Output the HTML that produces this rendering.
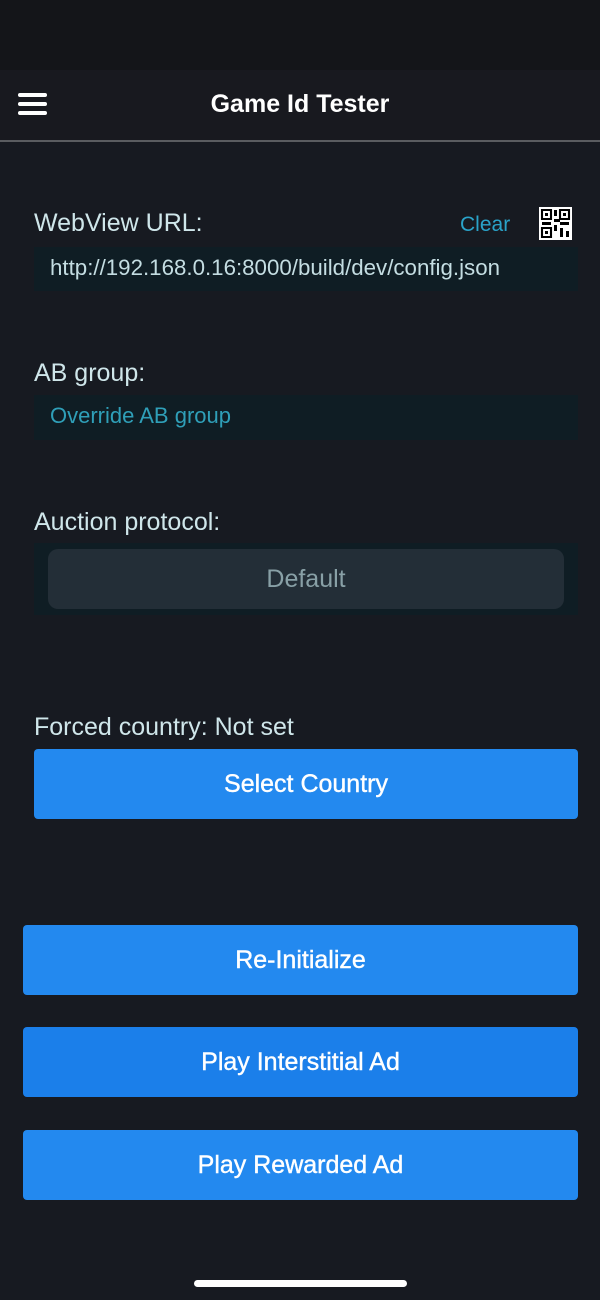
<!DOCTYPE html><html><head><style>
body{margin:0;width:600px;height:1300px;background:#171a21;font-family:"Liberation Sans",sans-serif;position:relative;overflow:hidden}
.a{position:absolute}
.lbl{color:#cfe6ea;font-size:25px}
.btn{position:absolute;background:#2389ef;border-radius:4px;color:#fff;font-size:25px;text-align:center;line-height:70px;height:70px;-webkit-text-stroke:0.4px #fff}
</style></head><body>
<div class="a" style="left:0;top:0;width:600px;height:70px;background:#141519"></div>
<div class="a" style="left:0;top:70px;width:600px;height:70px;background:#18191f"></div>
<div class="a" style="left:0;top:140px;width:600px;height:2px;background:#5a5c60"></div>
<div class="a" style="left:18px;top:93px;width:29px;height:4px;background:#fff;border-radius:2px"></div>
<div class="a" style="left:18px;top:102px;width:29px;height:4px;background:#fff;border-radius:2px"></div>
<div class="a" style="left:18px;top:111px;width:29px;height:4px;background:#fff;border-radius:2px"></div>
<div class="a" style="left:0;top:90px;width:600px;text-align:center;color:#fff;font-size:25px;font-weight:bold">Game Id Tester</div>
<div class="a lbl" style="left:34px;top:209px">WebView URL:</div>
<div class="a" style="left:460px;top:213px;color:#2aa3c9;font-size:21px">Clear</div>
<svg class="a" style="left:539px;top:207px" width="33" height="33" viewBox="0 0 11 11"><rect width="11" height="11" fill="#fff"/><g fill="#000"><path d="M1 1h3v3H1zM7 1h3v3H7zM1 7h3v3H1z" fill="none" stroke="#000" stroke-width=".7"/><rect x="2" y="2" width="1" height="1"/><rect x="8" y="2" width="1" height="1"/><rect x="2" y="8" width="1" height="1"/><rect x="5" y="1" width="1" height="2"/><rect x="5" y="4" width="2" height="1"/><rect x="7" y="5" width="3" height="1"/><rect x="5" y="6" width="1" height="2"/><rect x="7" y="7" width="1" height="3"/><rect x="9" y="8" width="1" height="2"/><rect x="1" y="5" width="3" height="1"/></g></svg>
<div class="a" style="left:34px;top:247px;width:544px;height:44px;background:#0f1d24"></div>
<div class="a" style="left:50px;top:255px;color:#c4dde2;font-size:22.3px">http://192.168.0.16:8000/build/dev/config.json</div>
<div class="a lbl" style="left:34px;top:359px">AB group:</div>
<div class="a" style="left:34px;top:395px;width:544px;height:45px;background:#0f1d24"></div>
<div class="a" style="left:50px;top:403px;color:#2f9fb8;font-size:22px">Override AB group</div>
<div class="a lbl" style="left:34px;top:508px">Auction protocol:</div>
<div class="a" style="left:34px;top:543px;width:544px;height:72px;background:#0f1d24"></div>
<div class="a" style="left:48px;top:549px;width:516px;height:60px;background:#232e37;border-radius:10px;color:#88a0a6;font-size:25px;text-align:center;line-height:60px">Default</div>
<div class="a lbl" style="left:34px;top:713px">Forced country: Not set</div>
<div class="btn" style="left:34px;top:749px;width:544px">Select Country</div>
<div class="btn" style="left:23px;top:925px;width:555px">Re-Initialize</div>
<div class="btn" style="left:23px;top:1027px;width:555px;background:#1b7fea">Play Interstitial Ad</div>
<div class="btn" style="left:23px;top:1130px;width:555px">Play Rewarded Ad</div>
<div class="a" style="left:194px;top:1280px;width:213px;height:7px;background:#fff;border-radius:4px"></div>
</body></html>
